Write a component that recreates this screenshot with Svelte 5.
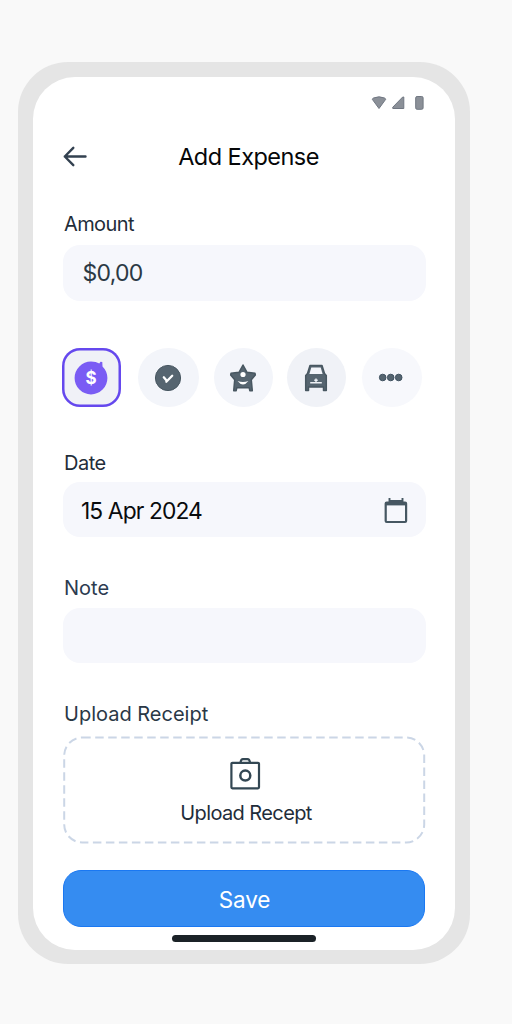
<script>
  const categories = ['money', 'check', 'star', 'car', 'more'];
  let selected = $state('money');
</script>

<main>
  <div class="phone">
    <div class="screen">
      <div class="status">
        <svg width="54" height="16" viewBox="0 0 54 16" fill="#8b9098" stroke="#707782" stroke-width="1" stroke-linejoin="round">
          <path d="M1.300 4.300Q1.500 3.500 2.500 3Q8 .6 13.500 3Q14.500 3.500 14.700 4.300L8 13.500Z" />
          <path d="M32.800 2V13.500H21.800V12.200L31.700 2Z" />
          <rect x="44.700" y="1.500" width="7.400" height="12.800" rx="1.400" />
        </svg>
      </div>

      <header>
        <button class="back" aria-label="Back">
          <svg width="26" height="22" viewBox="0 0 26 22" fill="none" stroke="#334150" stroke-width="2.400" stroke-linecap="round" stroke-linejoin="round">
            <path d="M22.500 10.500H1.800M10.300 1.800L1.800 10.500L10.300 19.200" />
          </svg>
        </button>
        <h1>Add Expense</h1>
      </header>

      <div class="label amount-label">Amount</div>
      <div class="field amount"><span>$0,00</span></div>

      <div class="categories">
        {#each categories as c}
          <button class="cat {c}" class:selected={selected === c} aria-label={c} onclick={() => (selected = c)}>
            {#if c === 'money'}
              <svg width="40" height="40" viewBox="0 0 40 40">
                <path d="M20 3.600C23.500 3.600 26 4.500 28.300 5.500L29.500 3.800L31.300 4L31.500 8.500C34.700 11.500 36.400 15.500 36.400 20A16.400 16.400 0 1 1 20 3.600Z" fill="#7a5cf4" />
                <text x="20" y="26" text-anchor="middle" fill="#fff">$</text>
              </svg>
            {:else if c === 'check'}
              <svg width="40" height="40" viewBox="0 0 40 40">
                <circle cx="20" cy="20" r="12.600" fill="#566570" stroke="#485761" />
                <path d="M15.800 19.300L18.300 22.200M18.300 23.800L24.200 17.800" fill="none" stroke="#fff" stroke-width="2.300" stroke-linecap="round" />
              </svg>
            {:else if c === 'star'}
              <svg width="40" height="40" viewBox="0 0 40 40">
                <path d="M20 7L24 14.300L32 15.300L32.300 17L28.300 21.800L29.300 32.700H26.800L26.200 29.800H13.800L13.200 32.700H10.700L11.700 21.800L7.700 17L8 15.300L16 14.300Z" fill="#566570" stroke="#485761" stroke-width="1.500" stroke-linejoin="round" />
                <circle cx="20" cy="16.500" r="2.600" fill="#fff" />
                <path d="M14.600 23Q20 30 25.400 23Q20 25 14.600 23Z" fill="#fff" />
              </svg>
            {:else if c === 'car'}
              <svg width="40" height="40" viewBox="0 0 40 40">
                <path d="M14 7.500H26L28.500 15.500L30.300 17.500V32.500H27.500V29H12.500V32.500H9.700V17.500L11.500 15.500Z" fill="#566570" stroke="#485761" stroke-width="1.500" stroke-linejoin="round" />
                <path d="M15.300 9.500H24.700L26.600 16H13.400Z" fill="#f3f5fa" />
                <path d="M14.200 24.800H25.800M20 20.500V24.500M18.300 22.200H21.700" fill="none" stroke="#eef1f5" stroke-width="1.400" />
              </svg>
            {:else}
              <svg width="40" height="40" viewBox="0 0 40 40" fill="#566570" stroke="#3f5160">
                <circle cx="10.700" cy="19.500" r="3.300" /><circle cx="18.700" cy="19.500" r="3.300" /><circle cx="26.700" cy="19.500" r="3.300" />
              </svg>
            {/if}
          </button>
        {/each}
      </div>

      <div class="label date-label">Date</div>
      <div class="field date">
        <span>15 Apr 2024</span>
        <svg width="24" height="27" viewBox="0 0 24 27" fill="none" stroke="#465762">
          <path d="M5.500 1V6M18.500 1V6M5 4H19" stroke-width="1.900" />
          <rect x="1.700" y="5.500" width="20.400" height="19.500" rx="1" stroke-width="2.200" />
          <path d="M2 6.800H22" stroke-width="3.200" />
        </svg>
      </div>

      <div class="label note-label">Note</div>
      <div class="field note"></div>

      <div class="label upload-label">Upload Receipt</div>
      <button class="upload">
        <svg class="dashes" width="363" height="108" viewBox="0 0 363 108" fill="none">
          <rect x="1.200" y="1.500" width="360" height="105" rx="18" stroke="#cbd6e6" stroke-width="2" stroke-dasharray="8.500 4.500" />
        </svg>
        <svg width="32" height="34" viewBox="0 0 32 34" fill="none" stroke="#334753" stroke-width="2.200" stroke-linejoin="round">
          <rect x="2.400" y="5.800" width="27.600" height="25.500" rx="1" />
          <path d="M11.500 5.500Q12 2.200 14 2.200H18.500Q20.500 2.200 21 5.500" />
          <circle cx="16.300" cy="18.600" r="5" stroke-width="2.500" />
        </svg>
        <span>Upload Recept</span>
      </button>

      <button class="save"><span>Save</span></button>
      <div class="home"></div>
    </div>
  </div>
</main>

<style>
  :global(body) { margin: 0; background: #f9f9f9; }
  main {
    box-sizing: border-box;
    height: 1024px;
    padding: 62px 42px 60px 18px;
    font-family: Inter, "Liberation Sans", sans-serif;
    color: #1f2d3a;
  }
  .phone {
    box-sizing: border-box;
    height: 902px;
    padding: 15px 15px 14px;
    border-radius: 50px;
    background: #e5e5e5;
  }
  .screen {
    box-sizing: border-box;
    height: 873px;
    padding: 18px 30px 0 30px;
    border-radius: 42px;
    background: #fff;
    display: flex;
    flex-direction: column;
  }
  svg { display: block; flex: none; }
  button { border: 0; padding: 0; background: none; font: inherit; color: inherit; }
  .status { display: flex; justify-content: flex-end; height: 16px; }
  header {
    display: grid;
    grid-template-columns: 26px 1fr 17px;
    align-items: center;
    height: 30px;
    margin-top: 31px;
  }
  h1 {
    margin: 0;
    text-align: center;
    font-size: 23.500px;
    line-height: 30px;
    font-weight: 400;
    letter-spacing: -0.550px;
    color: #060708;
  }
  .label { height: 24px; line-height: 24px; font-size: 20px; padding-left: 1px; white-space: nowrap; }
  .amount-label { margin-top: 40px; letter-spacing: -0.600px; }
  .field {
    box-sizing: border-box;
    display: flex;
    align-items: center;
    justify-content: space-between;
    width: 363px;
    height: 55px;
    border-radius: 17px;
    background: #f6f7fc;
    font-size: 23px;
    padding: 0 18px;
  }
  .amount { height: 56px; margin-top: 9px; padding: 0 20px 1px 19.500px; letter-spacing: -0.750px; color: #2b3944; }
  .categories {
    display: flex;
    height: 59px;
    margin: 47px 0 0 -1.500px;
  }
  .cat {
    display: flex;
    flex: none;
    width: 59px;
    align-items: center;
    justify-content: center;
    border-radius: 50%;
    background: #f3f5fa;
  }
  .check { width: 61.500px; margin-left: 17px; }
  .star { margin-left: 14.500px; }
  .car { margin-left: 14px; background: #f0f2f7; }
  .more { width: 60px; margin-left: 16px; background: #f7f8fc; }
  .selected { box-shadow: inset 0 0 0 2.500px #6548ee; border-radius: 18px; background: #f0f1f7; }
  .cat text { font-size: 17px; font-weight: 700; }
  .date-label { margin-top: 44px; letter-spacing: -0.500px; }
  .date { margin-top: 7px; padding-top: 1px; font-size: 22.800px; letter-spacing: -0.900px; color: #090b0d; }
  .note-label { margin-top: 39px; color: #2c3b50; }
  .note { margin-top: 8px; }
  .upload-label { margin-top: 39px; color: #2a3846; }
  .upload {
    position: relative;
    box-sizing: border-box;
    width: 363px;
    height: 108px;
    margin-top: 10px;
    padding-top: 21px;
    display: flex;
    flex-direction: column;
    align-items: center;
  }
  .dashes { position: absolute; inset: 0; }
  .upload span { margin: 10px 0 0 3px; font-size: 20px; line-height: 24px; letter-spacing: -0.600px; }
  .save {
    box-sizing: border-box;
    width: 362px;
    height: 57px;
    margin-top: 26px;
    padding: 2px 0 0 1px;
    border: 1px solid #1a78f2;
    border-radius: 18px;
    background: #358cf1;
    color: #fff;
    font-size: 22.500px;
    letter-spacing: -0.200px;
  }
  .home {
    width: 144px;
    height: 7px;
    margin: 8px 0 0 109px;
    border-radius: 4px;
    background: #1b2227;
  }
</style>
